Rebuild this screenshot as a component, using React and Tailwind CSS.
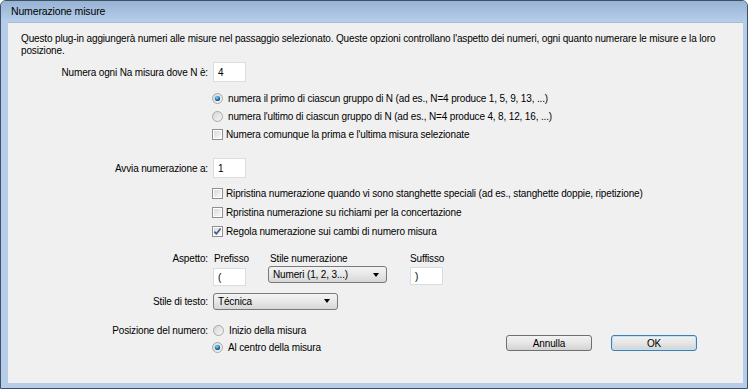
import React from "react";

const Radio = ({ checked }) => (
  <svg width="11" height="11" viewBox="0 0 11 11" className="shrink-0">
    <defs>
      <linearGradient id="rbg" x1="0" y1="0" x2="1" y2="1">
        <stop offset="0" stopColor="#d3d5d7" />
        <stop offset="1" stopColor="#f8f8f8" />
      </linearGradient>
      <radialGradient id="rdot" cx="0.4" cy="0.35" r="0.7">
        <stop offset="0" stopColor="#9fd6f5" />
        <stop offset="0.5" stopColor="#2a86c8" />
        <stop offset="1" stopColor="#13466e" />
      </radialGradient>
    </defs>
    <circle cx="5.5" cy="5.5" r="5" fill="url(#rbg)" stroke="#a8a8a8" strokeWidth="1" />
    {checked && <circle cx="5.5" cy="5.5" r="2.6" fill="url(#rdot)" />}
  </svg>
);

const Check = ({ checked }) => (
  <svg width="11" height="11" viewBox="0 0 11 11" className="shrink-0">
    <defs>
      <linearGradient id="cbg" x1="0" y1="0" x2="1" y2="1">
        <stop offset="0" stopColor="#d9dbdd" />
        <stop offset="1" stopColor="#f7f7f7" />
      </linearGradient>
    </defs>
    <rect x="0.5" y="0.5" width="10" height="10" fill="#fff" stroke="#8e8f8f" />
    <rect x="2" y="2" width="7" height="7" fill="url(#cbg)" />
    {checked && (
      <path d="M2.3 5.6 L4.4 7.8 L8.6 2.6" fill="none" stroke="#3d5a8a" strokeWidth="1.6" />
    )}
  </svg>
);

const Dropdown = ({ value, width }) => (
  <div
    className="h-[17px] flex items-center justify-between pl-[4px] pr-[7px] rounded-[3px] border border-[#7a7a7a] bg-gradient-to-b from-[#f3f3f3] via-[#e8e8e8] to-[#d6d6d6]"
    style={{ width }}
  >
    <span>{value}</span>
    <span className="w-0 h-0 border-l-[3.5px] border-r-[3.5px] border-t-[4px] border-l-transparent border-r-transparent border-t-black" />
  </div>
);

const TextBox = ({ value, h = "h-[20px]" }) => (
  <div className={`w-[33px] ${h} bg-white border border-[#d8dde3] flex items-center pl-[4px]`}>
    {value}
  </div>
);

const OptionRow = ({ type, checked, label, h = "h-[18px]" }) => (
  <div className={`flex items-center ${h} pl-[204px]`}>
    {type === "radio" ? <Radio checked={checked} /> : <Check checked={checked} />}
    <span className={type === "radio" ? "ml-[5px]" : "ml-[3px]"}>{label}</span>
  </div>
);

export default function App() {
  return (
    <div className="w-[748px] h-[389px] bg-white overflow-hidden font-['Liberation_Sans',Arial,sans-serif] text-[10px] text-black tracking-[-0.15px]">
      <div className="h-full flex flex-col bg-[#b5cde8] border border-[#3f5064] rounded-t-[6px]">
        {/* title bar */}
        <div className="h-[21px] shrink-0 flex items-center pl-[10px] text-[10.5px] rounded-t-[5px] bg-gradient-to-b from-[#97b3d4] to-[#b6cee9]">
          Numerazione misure
        </div>

        {/* client area */}
        <div className="flex-1 ml-[7px] mr-[4px] mb-[5px] bg-[#f0f0f0] border-t border-[#a9bdd4]">
          <p className="pl-[13px] pt-[10px] leading-[12px]">
            Questo plug-in aggiungerà numeri alle misure nel passaggio selezionato. Queste opzioni controllano l'aspetto dei numeri, ogni quanto numerare le misure e la loro
            <br />
            posizione.
          </p>

          <div className="flex items-center h-[20px] mt-[5px]">
            <div className="w-[205px] text-right pr-[5px]">Numera ogni Na misura dove N è:</div>
            <TextBox value="4" />
          </div>

          <div className="mt-[7px]">
            <OptionRow type="radio" checked label="numera il primo di ciascun gruppo di N (ad es., N=4 produce 1, 5, 9, 13, ...)" />
            <OptionRow type="radio" label="numera l'ultimo di ciascun gruppo di N (ad es., N=4 produce 4, 8, 12, 16, ...)" />
            <OptionRow type="check" label="Numera comunque la prima e l'ultima misura selezionate" />
          </div>

          <div className="flex items-center h-[20px] mt-[15px]">
            <div className="w-[205px] text-right pr-[5px]">Avvia numerazione a:</div>
            <TextBox value="1" />
          </div>

          <div className="mt-[6px]">
            <OptionRow type="check" h="h-[19px]" label="Ripristina numerazione quando vi sono stanghette speciali (ad es., stanghette doppie, ripetizione)" />
            <OptionRow type="check" h="h-[19px]" label="Rpristina numerazione su richiami per la concertazione" />
            <OptionRow type="check" h="h-[19px]" checked label="Regola numerazione sui cambi di numero misura" />
          </div>

          {/* Aspetto */}
          <div className="flex items-center h-[12px] mt-[11px]">
            <div className="w-[205px] text-right pr-[5px]">Aspetto:</div>
            <div className="w-[55px] pl-[1px]">Prefisso</div>
            <div className="w-[142px] pl-[2px]">Stile numerazione</div>
            <div>Suffisso</div>
          </div>
          <div className="flex items-start h-[20px] mt-[2px]">
            <div className="w-[205px]" />
            <div className="w-[55px] pt-[2px]">
              <TextBox value="(" h="h-[18px]" />
            </div>
            <div className="w-[142px]">
              <Dropdown value="Numeri (1, 2, 3...)" width={119} />
            </div>
            <div className="pt-[1px]">
              <TextBox value=")" h="h-[18px]" />
            </div>
          </div>

          <div className="flex items-center h-[18px] mt-[6px]">
            <div className="w-[205px] text-right pr-[5px]">Stile di testo:</div>
            <Dropdown value="Técnica" width={125} />
          </div>

          {/* Posizione + buttons */}
          <div className="flex items-start mt-[12px]">
            <div className="w-[498px]">
              <div className="flex items-center h-[17px]">
                <div className="w-[205px] text-right pr-[5px]">Posizione del numero:</div>
                <Radio />
                <span className="ml-[5px]">Inizio della misura</span>
              </div>
              <div className="flex items-center h-[17px] pl-[204px]">
                <Radio checked />
                <span className="ml-[5px]">Al centro della misura</span>
              </div>
            </div>
            <button className="mt-[13px] w-[86px] h-[16px] flex items-center justify-center rounded-[3px] border border-[#707070] bg-gradient-to-b from-[#f2f2f2] via-[#e6e6e6] to-[#d2d2d2]">
              Annulla
            </button>
            <button className="ml-[19px] mt-[13px] w-[86px] h-[16px] flex items-center justify-center rounded-[3px] border border-[#3c7fb1] bg-gradient-to-b from-[#f2f2f2] via-[#e6e6e6] to-[#d2d2d2] shadow-[inset_0_0_0_1px_#bfe3f5]">
              OK
            </button>
          </div>
        </div>
      </div>
    </div>
  );
}
